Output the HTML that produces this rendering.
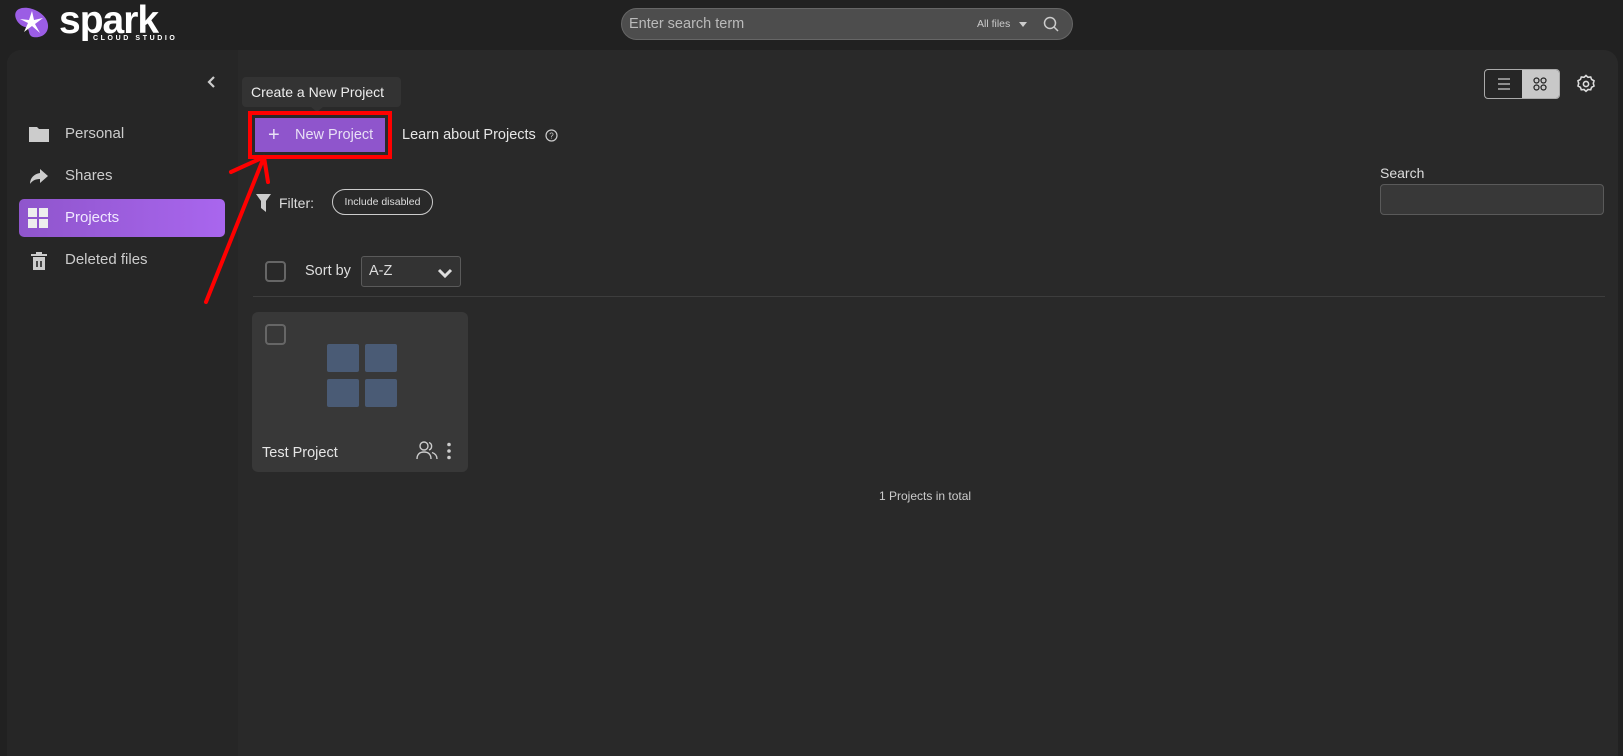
<!DOCTYPE html>
<html><head><meta charset="utf-8"><style>
*{margin:0;padding:0;box-sizing:border-box}
body{width:1623px;height:756px;background:#212121;font-family:"Liberation Sans",sans-serif;color:#ddd;position:relative;overflow:hidden}
.a{position:absolute}
.panel{left:7px;top:50px;width:1611px;height:706px;background:#292929;border-radius:14px 14px 0 0}
.side{left:7px;top:50px;width:231px;height:706px;background:#262626;border-radius:14px 0 0 0}
.nav{left:19px;width:206px;height:38px;border-radius:5px;font-size:15px;color:#ccc}
.nav span{position:absolute;left:46px;top:10px}
.nav svg{position:absolute;left:9px;top:9px}
</style></head><body>
<div class="a panel"></div><div class="a side"></div>

<!-- logo -->
<svg class="a" style="left:13px;top:5px" width="38" height="36" viewBox="0 0 38 36"><path d="M6 4 C14 0 30 6 34 16 C38 26 30 34 20 32 C14 30 18 24 12 22 C4 20 -2 8 6 4Z" fill="#9b5de5"/><path d="M19 6 L21 15 L30 13 L22 19 L27 28 L19 21 L11 27 L15 18 L7 14 L16 15Z" fill="#fff"/></svg>
<div class="a" style="left:59px;top:-1px;font-size:39px;font-weight:bold;color:#fff;letter-spacing:-1px">spark</div>
<div class="a" style="left:93px;top:35px;font-size:7px;font-weight:bold;color:#fff;letter-spacing:2.6px">CLOUD STUDIO</div>

<!-- top search -->
<div class="a" style="left:621px;top:8px;width:452px;height:32px;border-radius:16px;background:#4d4d4d;border:1px solid #666"></div>
<div class="a" style="left:629px;top:16px;font-size:14.5px;color:#bbb">Enter search term</div>
<div class="a" style="left:977px;top:18px;font-size:10.5px;color:#ccc">All files</div>
<div class="a" style="left:1019px;top:22px;border:4px solid transparent;border-top:5px solid #ccc"></div>
<svg class="a" style="left:1043px;top:16px" width="16" height="16" viewBox="0 0 16 16" fill="none" stroke="#ccc" stroke-width="1.5"><circle cx="7" cy="7" r="5.5"/><path d="M11 11l4 4"/></svg>

<!-- collapse -->
<svg class="a" style="left:207px;top:76px" width="10" height="12" viewBox="0 0 10 12"><path d="M7 1L2 6l5 5" stroke="#ccc" stroke-width="2.2" fill="none"/></svg>

<!-- nav -->
<div class="a nav" style="top:115px"><svg width="22" height="20" viewBox="0 0 22 20"><path d="M1 3h8l2 2h10v13H1z" fill="#ccc"/></svg><span>Personal</span></div>
<div class="a nav" style="top:157px"><svg width="22" height="20" viewBox="0 0 22 20"><path d="M12 3l8 7-8 7v-4C7 13 4 15 2 18c0-6 4-10 10-11z" fill="#ccc"/></svg><span>Shares</span></div>
<div class="a nav" style="top:199px;background:linear-gradient(90deg,#8f55cc,#a966ee);color:#f0e8ff"><svg width="20" height="20" viewBox="0 0 20 20" fill="#eee"><rect x="0" y="0" width="9" height="9"/><rect x="11" y="0" width="9" height="9"/><rect x="0" y="11" width="9" height="9"/><rect x="11" y="11" width="9" height="9"/></svg><span>Projects</span></div>
<div class="a nav" style="top:241px"><svg width="22" height="22" viewBox="0 0 22 22"><path d="M3 4h16v2H3zM8 2h6v2H8zM5 7h12v13H5z" fill="#ccc"/><path d="M9 11v6M13 11v6" stroke="#262626" stroke-width="1.6"/></svg><span>Deleted files</span></div>

<!-- tooltip -->
<div class="a" style="left:242px;top:77px;width:159px;height:30px;background:#333;border-radius:4px"></div>
<div class="a" style="left:311px;top:107px;border:6px solid transparent;border-top:5px solid #333"></div>
<div class="a" style="left:251px;top:84px;font-size:14px;color:#eee">Create a New Project</div>

<!-- new project -->
<div class="a" style="left:248px;top:111px;width:144px;height:48px;border:4px solid #f00"></div>
<div class="a" style="left:255px;top:118px;width:130px;height:34px;background:#8f55cc"></div>
<div class="a" style="left:268px;top:125px;font-size:20px;color:#e8e0f5;line-height:20px">+</div>
<div class="a" style="left:295px;top:127px;font-size:14.5px;color:#e8e0f5">New Project</div>
<div class="a" style="left:402px;top:127px;font-size:14.5px;color:#e6e6e6">Learn about Projects</div>
<svg class="a" style="left:545px;top:129px" width="13" height="13" viewBox="0 0 13 13"><circle cx="6.5" cy="6.5" r="5.5" fill="none" stroke="#ccc" stroke-width="1.2"/><text x="6.5" y="9.5" font-size="8" text-anchor="middle" fill="#ccc" font-family="Liberation Sans">?</text></svg>

<!-- arrow -->
<svg class="a" style="left:0;top:0" width="300" height="320"><path d="M206 302L264 157M264 157L231 172M264 157L268 182" stroke="#f00" stroke-width="4" fill="none" stroke-linecap="round"/></svg>

<!-- filter -->
<svg class="a" style="left:256px;top:194px" width="15" height="18" viewBox="0 0 15 18"><path d="M0 0h15l-5 7v11l-5-4V7z" fill="#ccc"/></svg>
<div class="a" style="left:279px;top:195px;font-size:14px;color:#ddd">Filter:</div>
<div class="a" style="left:332px;top:189px;width:101px;height:26px;border:1px solid #ccc;border-radius:13px;font-size:10.5px;color:#ddd;text-align:center;line-height:24px">Include disabled</div>

<!-- right search -->
<div class="a" style="left:1380px;top:165px;font-size:14px;color:#ddd">Search</div>
<div class="a" style="left:1380px;top:184px;width:224px;height:31px;background:#383838;border:1px solid #5a5a5a;border-radius:4px"></div>

<!-- view toggle -->
<div class="a" style="left:1484px;top:69px;width:76px;height:30px;border:1px solid #aaa;border-radius:4px;overflow:hidden;background:#262626"><div style="position:absolute;left:37px;top:0;width:39px;height:30px;background:#c8c8c8"></div></div>
<svg class="a" style="left:1497px;top:78px" width="14" height="12"><path d="M1 1h12M1 6h12M1 11h12" stroke="#ccc" stroke-width="1.2"/></svg>
<svg class="a" style="left:1533px;top:77px" width="14" height="14" fill="none" stroke="#222" stroke-width="1.2"><circle cx="3.5" cy="3.5" r="2.5"/><circle cx="10.5" cy="3.5" r="2.5"/><circle cx="3.5" cy="10.5" r="2.5"/><circle cx="10.5" cy="10.5" r="2.5"/></svg>
<svg class="a" style="left:1576px;top:74px" width="20" height="20" viewBox="0 0 20 20" fill="none" stroke="#ddd" stroke-width="1.6"><path d="M10 1.5l2 1.8 2.7-.3.9 2.5 2.4 1.3-.7 2.6.7 2.6-2.4 1.3-.9 2.5-2.7-.3-2 1.8-2-1.8-2.7.3-.9-2.5-2.4-1.3.7-2.6-.7-2.6 2.4-1.3.9-2.5 2.7.3z"/><circle cx="10" cy="10" r="2.6"/></svg>

<!-- sort -->
<div class="a" style="left:265px;top:261px;width:21px;height:21px;border:2px solid #666;border-radius:4px"></div>
<div class="a" style="left:305px;top:263px;font-size:14.5px;color:#ddd">Sort by</div>
<div class="a" style="left:361px;top:256px;width:100px;height:31px;border:1px solid #5a5a5a;border-radius:3px;background:#333"></div>
<div class="a" style="left:369px;top:263px;font-size:14.5px;color:#ddd">A-Z</div>
<svg class="a" style="left:437px;top:267px" width="16" height="12"><path d="M2 3l6 6 6-6" stroke="#ddd" stroke-width="3" fill="none"/></svg>
<div class="a" style="left:253px;top:296px;width:1352px;height:1px;background:#3d3d3d"></div>

<!-- card -->
<div class="a" style="left:252px;top:312px;width:216px;height:160px;background:#383838;border-radius:6px"></div>
<div class="a" style="left:265px;top:324px;width:21px;height:21px;border:2px solid #666;border-radius:4px"></div>
<svg class="a" style="left:327px;top:344px" width="70" height="63"><g fill="#4a5b75"><rect x="0" y="0" width="32" height="28" rx="2"/><rect x="38" y="0" width="32" height="28" rx="2"/><rect x="0" y="35" width="32" height="28" rx="2"/><rect x="38" y="35" width="32" height="28" rx="2"/></g></svg>
<div class="a" style="left:262px;top:445px;font-size:14.5px;color:#e6e6e6">Test Project</div>
<svg class="a" style="left:416px;top:440px" width="22" height="20" viewBox="0 0 22 20" fill="none" stroke="#ccc" stroke-width="1.4"><circle cx="8" cy="6" r="4"/><path d="M1 19c0-5 3-7 7-7s7 2 7 7"/><path d="M13 2.5a4 4 0 0 1 0 7.5M16 12.5c3 1 5 3 5 6.5"/></svg>
<svg class="a" style="left:446px;top:442px" width="6" height="18" fill="#ccc"><circle cx="3" cy="2.5" r="1.8"/><circle cx="3" cy="9" r="1.8"/><circle cx="3" cy="15.5" r="1.8"/></svg>

<div class="a" style="left:879px;top:489px;font-size:12px;color:#ccc">1 Projects in total</div>
</body></html>
